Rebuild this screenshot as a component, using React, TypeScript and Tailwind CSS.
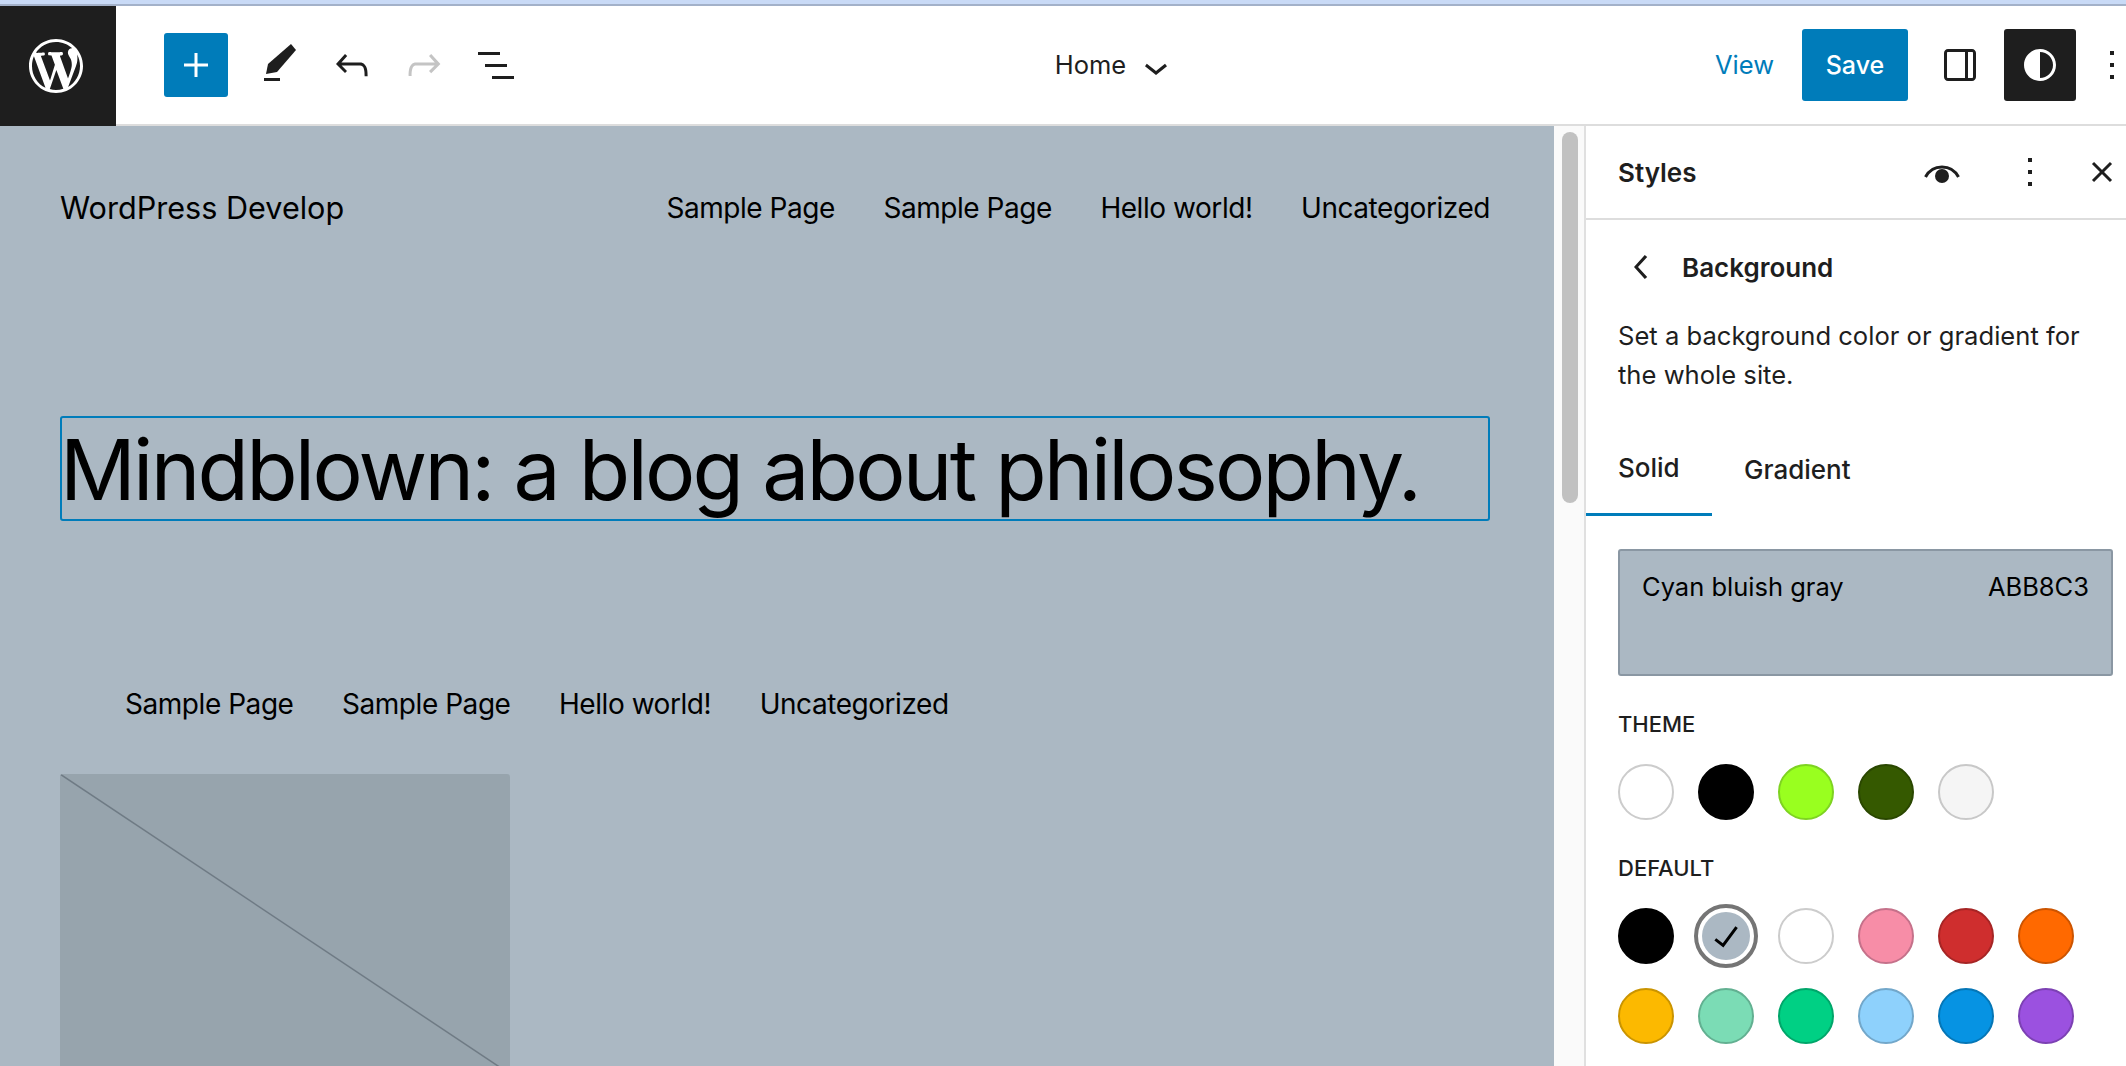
import type { ReactNode } from 'react'

function Icon({ children, className = '' }: { children: ReactNode; className?: string }) {
  return (
    <svg viewBox="0 0 24 24" className={`w-12 h-12 fill-current shrink-0 ${className}`}>
      {children}
    </svg>
  )
}

const WP_LOGO =
  'M20 10c0-5.51-4.49-10-10-10C4.48 0 0 4.49 0 10c0 5.52 4.48 10 10 10 5.51 0 10-4.48 10-10zM7.78 15.37L4.37 6.22c.55-.02 1.17-.08 1.17-.08.5-.06.44-1.13-.06-1.11 0 0-1.45.11-2.37.11-.18 0-.37 0-.58-.01C4.12 2.69 6.87 1.11 10 1.11c2.33 0 4.45.87 6.05 2.34-.68-.11-1.65.39-1.65 1.58 0 .74.45 1.36.9 2.1.35.61.55 1.36.55 2.46 0 1.49-1.4 5-1.4 5l-3.03-8.37c.54-.02.82-.17.82-.17.5-.05.44-1.25-.06-1.22 0 0-1.44.12-2.38.12-.87 0-2.33-.12-2.33-.12-.5-.03-.56 1.2-.06 1.22l.92.08 1.26 3.41zM17.41 10c.24-.64.74-1.87.43-4.25.7 1.29 1.05 2.71 1.05 4.25 0 3.29-1.73 6.24-4.4 7.78.97-2.59 1.94-5.2 2.92-7.78zM6.1 18.09C3.12 16.65 1.11 13.53 1.11 10c0-1.3.23-2.48.72-3.59C3.25 10.3 4.67 14.2 6.1 18.09zm4.03-6.63l2.58 6.98c-.86.29-1.76.45-2.71.45-.79 0-1.57-.11-2.29-.33.81-2.38 1.62-4.74 2.42-7.1z'

const MoreDots = () => (
  <Icon>
    <path d="M13 19h-2v-2h2v2zm0-6h-2v-2h2v2zm0-6h-2V5h2v2z" />
  </Icon>
)

function ToolButton({ children }: { children: ReactNode }) {
  return <button className="w-[72px] h-[72px] flex items-center justify-center shrink-0 text-[#1e1e1e]">{children}</button>
}

function Nav({ className = '' }: { className?: string }) {
  return (
    <nav className={`flex gap-[48.5px] text-[28px] tracking-[-0.45px] leading-[40px] text-black ${className}`}>
      <span>Sample Page</span>
      <span>Sample Page</span>
      <span>Hello world!</span>
      <span>Uncategorized</span>
    </nav>
  )
}

function Swatch({ bg, border }: { bg: string; border: string }) {
  return <div className={`w-14 h-14 rounded-full border-2 ${bg} ${border}`} />
}

export default function App() {
  return (
    <div className="w-[2126px] h-[1066px] overflow-hidden flex flex-col bg-white font-['Inter','Liberation_Sans',sans-serif] text-[#1e1e1e]">
      <div className="h-[4px] bg-[#c9daf6] shrink-0" />
      <div className="h-[2px] bg-[#a3b1c9] shrink-0" />

      {/* top bar */}
      <header className="h-[120px] shrink-0 flex items-center border-b-2 border-[#dddddd] bg-white">
        <div className="w-[116px] h-[120px] -mb-[2px] bg-[#1e1e1e] flex items-center justify-center pr-1 shrink-0">
          <svg viewBox="0 0 20 20" className="w-[54px] h-[54px] fill-white">
            <path d={WP_LOGO} />
          </svg>
        </div>
        <button className="ml-12 w-16 h-16 rounded-[3px] bg-[#007cba] text-white flex items-center justify-center shrink-0">
          <Icon>
            <path d="M11.25 12.75V18h1.5v-5.25H18v-1.5h-5.25V6h-1.5v5.25H6v1.5h5.25Z" />
          </Icon>
        </button>
        <div className="flex ml-4">
          <ToolButton>
            <svg viewBox="0 0 48 48" className="w-12 h-12 fill-current">
              <path d="M35 3 L40 9 L21 31 L10 33 L12 23 Z" />
              <rect x="8" y="37" width="16" height="3" />
            </svg>
          </ToolButton>
          <ToolButton>
            <Icon>
              <path d="M18.3 11.7c-.6-.6-1.4-.9-2.3-.9H6.7l2.9-3.3-1.1-1-4.5 5L8.5 16l1-1-2.7-2.7H16c.5 0 .9.2 1.3.5 1 1 1 3.4 1 4.5v.3h1.5v-.2c0-1.5 0-4.3-1.5-5.7z" />
            </Icon>
          </ToolButton>
          <ToolButton>
            <Icon className="text-[#c4c4c4]">
              <path d="M15.6 6.5l-1.1 1 2.9 3.3H8c-.9 0-1.7.3-2.3.9-1.4 1.5-1.4 4.2-1.4 5.6v.2h1.5v-.3c0-1.1 0-3.5 1-4.5.3-.3.7-.5 1.3-.5h9.2L14.5 15l1.1 1.1 4.6-4.6-4.6-5z" />
            </Icon>
          </ToolButton>
          <ToolButton>
            <Icon>
              <path d="M3 5.5h11V7H3V5.5zm3.5 6h11V13h-11v-1.5zM10 17.5h11V19H10v-1.5z" />
            </Icon>
          </ToolButton>
        </div>

        <div className="flex-1 flex items-center justify-center pr-[25px]">
          <span className="text-[25.5px]">Home</span>
          <Icon className="-mr-3 ml-[6px] mt-1">
            <path d="M17.5 11.6L12 16l-5.5-4.4.9-1.2L12 14l4.5-3.6 1 1.2z" />
          </Icon>
        </div>

        <div className="flex items-center shrink-0 w-[440px] -mr-[30px]">
          <span className="text-[25.5px] text-[#007cba] w-[87px] -ml-[1px]">View</span>
          <button className="w-[106px] h-[72px] rounded-[3px] bg-[#007cba] text-white text-[25px] font-medium pt-[2px] shrink-0">Save</button>
          <div className="ml-4">
            <ToolButton>
              <Icon>
                <path d="M18 4H6c-1.1 0-2 .9-2 2v12c0 1.1.9 2 2 2h12c1.1 0 2-.9 2-2V6c0-1.1-.9-2-2-2zM5.5 18V6c0-.3.2-.5.5-.5h8.5v13H6c-.3 0-.5-.2-.5-.5zm13 0c0 .3-.2.5-.5.5h-2v-13h2c.3 0 .5.2.5.5v12z" />
              </Icon>
            </ToolButton>
          </div>
          <button className="ml-2 w-[72px] h-[72px] rounded-[3px] bg-[#1e1e1e] text-white flex items-center justify-center shrink-0">
            <Icon>
              <path d="M12 4c-4.4 0-8 3.6-8 8s3.6 8 8 8 8-3.6 8-8-3.6-8-8-8zm0 14.5v-13c3.6 0 6.5 2.9 6.5 6.5s-2.9 6.5-6.5 6.5z" />
            </Icon>
          </button>
          <ToolButton>
            <MoreDots />
          </ToolButton>
        </div>
      </header>

      <div className="flex-1 flex min-h-0">
        {/* canvas */}
        <main className="w-[1554px] shrink-0 bg-[#abb8c3] pl-[60px] pr-[64px] overflow-hidden text-black">
          <div className="flex items-center justify-between pt-[62px]">
            <span className="text-[30.6px] leading-[40px]">WordPress Develop</span>
            <Nav />
          </div>
          <div className="mt-[188px] h-[105px] w-[1430px] border-2 border-[#007cba] rounded-[3px] flex items-center whitespace-nowrap">
            <span className="text-[84px] leading-none tracking-[-2.78px] -ml-[2px] mt-[3px]">Mindblown: a blog about philosophy.</span>
          </div>
          <Nav className="mt-[163px] ml-[65px]" />
          <div className="mt-[50px] w-[450px] h-[300px] rounded-[3px] bg-[#97a4ad] overflow-hidden">
            <svg viewBox="0 0 450 300" className="w-full h-full">
              <line x1="0" y1="0" x2="450" y2="300" stroke="#6f7b85" strokeWidth="1.5" />
            </svg>
          </div>
        </main>

        {/* scrollbar */}
        <div className="w-[32px] shrink-0 bg-[#fafafa] border-r-2 border-[#e0e0e0] pl-2 pt-[6px]">
          <div className="w-4 h-[371px] rounded-full bg-[#c1c1c1]" />
        </div>

        {/* styles panel */}
        <aside className="flex-1 min-w-0 bg-white">
          <div className="h-[94px] border-b-2 border-[#dddddd] flex items-center pl-8">
            <h2 className="text-[26px] font-semibold">Styles</h2>
            <div className="ml-auto flex items-center text-[#1e1e1e]">
              <svg viewBox="0 0 48 48" className="w-12 h-12 fill-current shrink-0">
                <path d="M7.5 29 C11 22.5 17 19 24 19 C31 19 37 22.5 40.5 29" fill="none" stroke="currentColor" strokeWidth="3" />
                <circle cx="24" cy="28" r="7" />
              </svg>
              <div className="ml-10">
                <MoreDots />
              </div>
              <div className="ml-6">
                <svg viewBox="0 0 48 48" className="w-12 h-12 shrink-0" stroke="currentColor" strokeWidth="3">
                  <line x1="15" y1="15" x2="33" y2="33" />
                  <line x1="33" y1="15" x2="15" y2="33" />
                </svg>
              </div>
            </div>
          </div>

          <div className="flex items-center h-[48px] mt-[23px] pl-[32px]">
            <Icon>
              <path d="M14.6 7l-1.2-1L8 12l5.4 6 1.2-1-4.6-5z" />
            </Icon>
            <span className="ml-[16px] text-[26px] font-semibold">Background</span>
          </div>

          <p className="mt-[25px] pl-8 text-[25.6px] leading-[39px] text-[#1e1e1e]">
            Set a background color or gradient for
            <br />
            the whole site.
          </p>

          <div className="mt-[28px] flex h-[96px]">
            <div className="w-[126px] pl-8 h-[94px] border-b-[3px] border-[#007cba] flex items-center text-[26px] font-medium">Solid</div>
            <div className="pl-8 h-[94px] flex items-center text-[26px] font-medium">Gradient</div>
          </div>

          <div className="mt-[31px] ml-8 w-[495px] h-[127px] rounded-[3px] border-2 border-[#8a97a3] bg-[#abb8c3] flex justify-between px-[22px] pt-[18px] text-[25.5px] leading-[36px] text-black">
            <span>Cyan bluish gray</span>
            <span>ABB8C3</span>
          </div>

          <h3 className="mt-[32px] ml-8 text-[22px] leading-[32px] font-medium">THEME</h3>
          <div className="mt-[24px] ml-8 flex gap-6">
            <Swatch bg="bg-white" border="border-[#cccccc]" />
            <Swatch bg="bg-black" border="border-black" />
            <Swatch bg="bg-[#99ff1f]" border="border-[#7ed321]" />
            <Swatch bg="bg-[#355900]" border="border-[#2a4700]" />
            <Swatch bg="bg-[#f5f5f5]" border="border-[#c8c8c8]" />
          </div>

          <h3 className="mt-[32px] ml-8 text-[22px] leading-[32px] font-medium">DEFAULT</h3>
          <div className="mt-6 ml-8 grid grid-cols-[repeat(6,56px)] gap-x-6 gap-y-6">
            <Swatch bg="bg-black" border="border-black" />
            <div className="relative w-14 h-14 rounded-full bg-[#abb8c3] flex items-center justify-center">
              <div className="absolute -inset-1 rounded-full border-4 border-[#757575] bg-white" />
              <div className="absolute inset-1 rounded-full bg-[#abb8c3]" />
              <Icon className="relative text-black">
                <path d="M16.7 7.1l-6.3 8.5-3.3-2.5-.9 1.2 4.5 3.4L17.9 8z" />
              </Icon>
            </div>
            <Swatch bg="bg-white" border="border-[#cccccc]" />
            <Swatch bg="bg-[#f78da7]" border="border-[#c5718a]" />
            <Swatch bg="bg-[#cf2e2e]" border="border-[#a62525]" />
            <Swatch bg="bg-[#ff6900]" border="border-[#cc5400]" />
            <Swatch bg="bg-[#fcb900]" border="border-[#ca9400]" />
            <Swatch bg="bg-[#7bdcb5]" border="border-[#62b091]" />
            <Swatch bg="bg-[#00d084]" border="border-[#00a66a]" />
            <Swatch bg="bg-[#8ed1fc]" border="border-[#72a7ca]" />
            <Swatch bg="bg-[#0693e3]" border="border-[#0576b6]" />
            <Swatch bg="bg-[#9b51e0]" border="border-[#7c41b3]" />
          </div>
        </aside>
      </div>
    </div>
  )
}
